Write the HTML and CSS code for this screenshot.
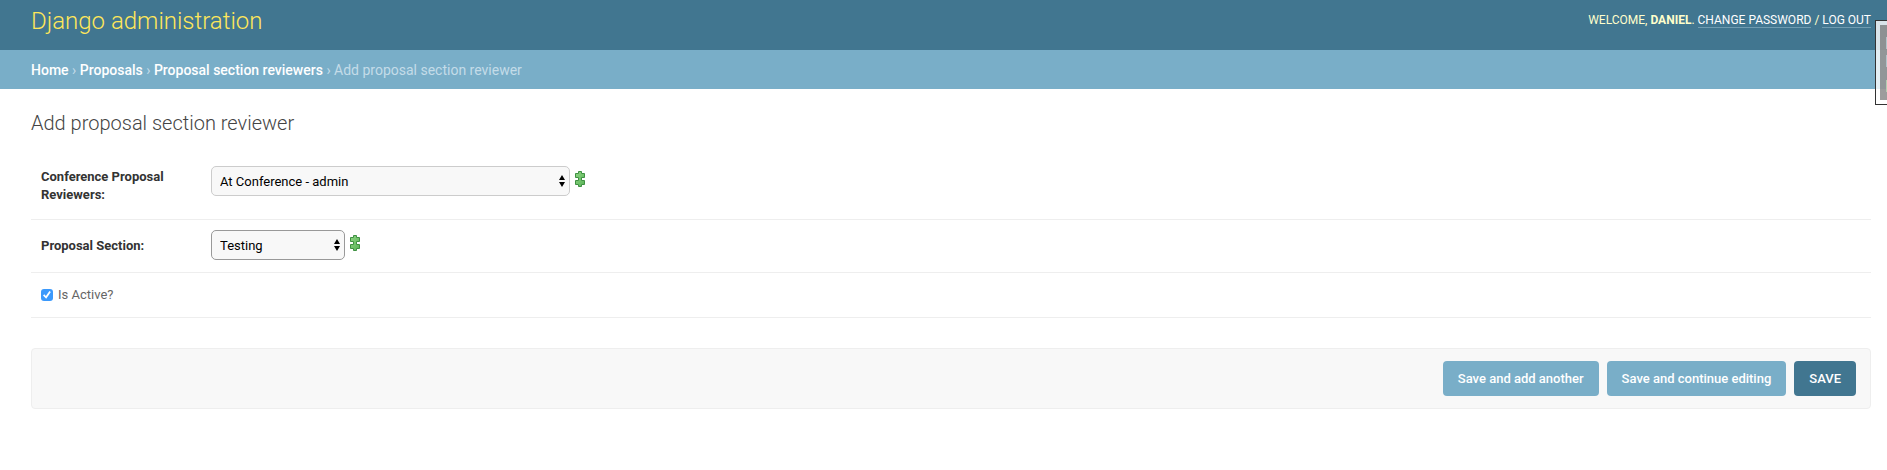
FILE: index.html
```html
<!DOCTYPE html>
<html lang="en">
<head>
<meta charset="utf-8">
<title>Add proposal section reviewer</title>
<link rel="stylesheet" href="styles.css">
</head>
<body>
<svg class="defs" aria-hidden="true">
  <defs>
    <linearGradient id="leaf" x1="0" y1="0" x2="1" y2="1">
      <stop offset="0" stop-color="#8fd483"/>
      <stop offset="1" stop-color="#58b356"/>
    </linearGradient>
    <symbol id="add" viewBox="0 0 10 16">
      <path d="M3.500 .5h3v2h3v4h-3v3h3v4h-3v2h-3v-2h-3v-4h3v-3h-3v-4h3z" fill="url(#leaf)" stroke="#3f9142"/>
    </symbol>
  </defs>
</svg>
<header class="header">
  <h1 class="site-name">Django administration</h1>
  <div class="user-tools">Welcome, <strong>Daniel</strong>. <a href="#">Change password</a> / <a href="#">Log out</a></div>
</header>
<nav class="breadcrumbs"><a href="#">Home</a> › <a href="#">Proposals</a> › <a href="#">Proposal section reviewers</a> › Add proposal section reviewer</nav>
<main class="content">
  <h2 class="title">Add proposal section reviewer</h2>
  <form>
    <div class="form-row form-row-tall">
      <label class="field-label" for="reviewers">Conference Proposal Reviewers:</label>
      <span class="select-wrap">
        <select id="reviewers" class="select select-wide"><option>At Conference - admin</option></select>
        <svg class="arrows" viewBox="0 0 6 12" aria-hidden="true"><path d="M3 0l3 5H0zM3 12L0 7h6z"/></svg>
      </span>
      <a class="add-link" href="#" aria-label="Add another reviewer"><svg class="add-icon"><use href="#add"/></svg></a>
    </div>
    <div class="form-row">
      <label class="field-label field-label-single" for="section">Proposal Section:</label>
      <span class="select-wrap">
        <select id="section" class="select select-focus"><option>Testing</option></select>
        <svg class="arrows" viewBox="0 0 6 12" aria-hidden="true"><path d="M3 0l3 5H0zM3 12L0 7h6z"/></svg>
      </span>
      <a class="add-link" href="#" aria-label="Add another section"><svg class="add-icon"><use href="#add"/></svg></a>
    </div>
    <div class="form-row form-row-check">
      <input class="checkbox" type="checkbox" id="active" checked>
      <label class="check-label" for="active">Is Active?</label>
    </div>
    <div class="submit-row">
      <button class="button" type="button">Save and add another</button>
      <button class="button" type="button">Save and continue editing</button>
      <button class="button button-default" type="submit">SAVE</button>
    </div>
  </form>
</main>
<aside class="side-panel" aria-hidden="true"><div class="side-panel-body"><i></i><i></i><i></i></div></aside>
</body>
</html>
```

FILE: styles.css
```css
* { box-sizing: border-box; }
body {
  margin: 0;
  background: #fff;
  color: #333;
  font-family: Roboto, "Liberation Sans", sans-serif;
  font-size: 13px;
}
.defs { position: absolute; width: 0; height: 0; }
.header {
  display: flex;
  justify-content: space-between;
  align-items: flex-start;
  height: 50px;
  padding: 6px 16px 0 31px;
  background: #417690;
  color: #ffc;
}
.site-name {
  margin: 0;
  color: #ffe75a;
  font-size: 24px;
  font-weight: 300;
  line-height: 30px;
}
.user-tools {
  padding-top: 6px;
  font-size: 12px;
  line-height: 16px;
  text-transform: uppercase;
}
.user-tools a {
  color: #fff;
  text-decoration: none;
  border-bottom: 1px solid #6f9cb1;
}
.breadcrumbs {
  padding: 11px 31px 9px;
  background: #79aec8;
  color: #c4dce8;
  font-size: 14px;
  line-height: 19px;
}
.breadcrumbs a {
  color: #fff;
  font-weight: 500;
  text-decoration: none;
}
.content { padding: 21px 16px 20px 31px; }
.title {
  margin: 0 0 19px;
  color: #444;
  font-size: 20px;
  font-weight: 300;
  line-height: 27px;
}
.form-row {
  display: flex;
  align-items: flex-start;
  padding: 10px 10px 12px;
  border-bottom: 1px solid #eee;
}
.form-row-tall { padding-bottom: 15px; }
.form-row-check {
  align-items: center;
  gap: 5px;
  padding: 13px 10px;
}
.field-label {
  width: 160px;
  margin-right: 10px;
  padding: 2px 20px 0 0;
  font-weight: 700;
  line-height: 18px;
}
.field-label-single { padding-top: 7px; }
.select-wrap { position: relative; display: flex; }
.select {
  appearance: none;
  width: 134px;
  height: 30px;
  padding: 0 24px 0 8px;
  border: 1px solid #ccc;
  border-radius: 5px;
  background: #f8f8f8;
  color: #000;
  font-family: inherit;
  font-size: 13px;
}
.select-wide { width: 359px; }
.select-focus { border-color: #999; }
.arrows {
  position: absolute;
  top: 9px;
  right: 5px;
  width: 6px;
  height: 12px;
  pointer-events: none;
}
.add-link { padding: 5px 0 0 5px; }
.add-icon { display: block; width: 10px; height: 16px; }
.checkbox {
  appearance: none;
  display: grid;
  place-items: center;
  width: 12px;
  height: 12px;
  margin: 0;
  border-radius: 3px;
  background: #3b99fc;
}
.checkbox:checked::after {
  content: "";
  width: 8px;
  height: 8px;
  background: #fff;
  clip-path: polygon(0 56%, 16% 42%, 36% 64%, 80% 0, 98% 12%, 40% 96%);
}
.check-label { color: #666; line-height: 18px; }
.submit-row {
  display: flex;
  justify-content: flex-end;
  gap: 8px;
  margin-top: 30px;
  padding: 12px 14px;
  border: 1px solid #eee;
  border-radius: 4px;
  background: #f8f8f8;
}
.button {
  height: 35px;
  padding: 0 15px;
  border: 0;
  border-radius: 4px;
  background: #79aec8;
  color: #fff;
  font-family: inherit;
  font-size: 13px;
  font-weight: 500;
}
.button-default { background: #417690; }
.side-panel {
  position: fixed;
  top: 20px;
  right: 0;
  width: 12px;
  height: 85px;
  padding: 4px 0 4px 4px;
  border: 1px solid #333;
  border-right: 0;
  background: rgba(255, 255, 255, 0.8);
}
.side-panel-body {
  display: flex;
  flex-direction: column;
  align-items: flex-end;
  gap: 6px;
  height: 75px;
  padding-top: 12px;
  background: rgba(90, 90, 90, 0.6);
}
.side-panel-body i {
  width: 1px;
  height: 12px;
  background: #b4c4ca;
}
.side-panel-body i:last-child { margin-top: 7px; background: #b5cdb2; }
```
